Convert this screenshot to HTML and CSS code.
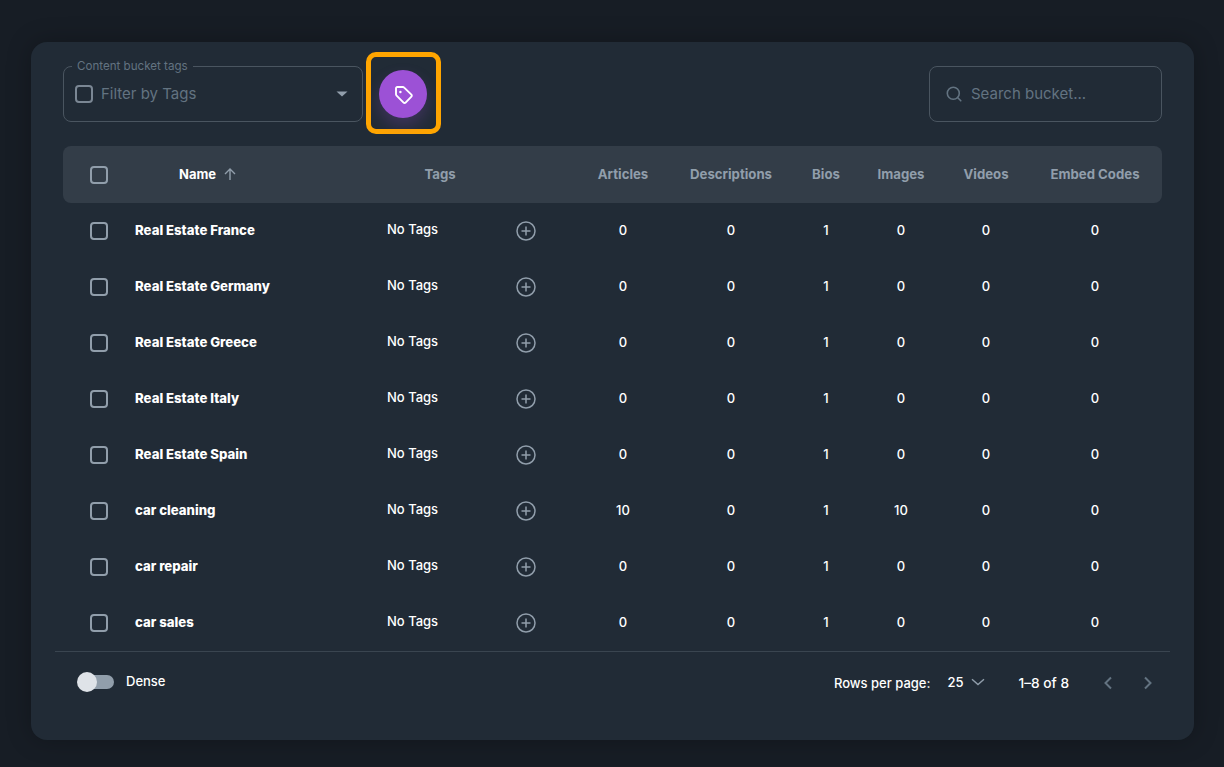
FILE: index.html
```html
<!DOCTYPE html>
<html>
<head>
    <title>Content Buckets</title>
    <meta charset="UTF-8">
    <link rel="stylesheet" href="styles.css">
</head>
<body>
    <div class="card">
        <div class="toolbar">
            <div class="filter">
                <span class="filter-label">Content bucket tags</span>
                <span class="checkbox dim"></span>
                <span class="filter-text">Filter by Tags</span>
                <svg class="caret" width="12" height="6" viewBox="0 0 12 6"><path d="M0.5 0.5h11L6 5.5z" fill="#919eab"/></svg>
            </div>
            <div class="highlight">
                <button class="tag-button">
                    <svg width="22" height="22" viewBox="0 0 22 22" fill="none" stroke="#fff" stroke-width="1.9" stroke-linejoin="round">
                        <path d="M4 5.2a1.2 1.2 0 0 1 1.2-1.2h5.6a2 2 0 0 1 1.4.6l7.2 7a1.4 1.4 0 0 1 0 2l-5.8 6a1.4 1.4 0 0 1-2 0l-7-7a2 2 0 0 1-.6-1.4z"/>
                        <circle cx="8.4" cy="9" r="1.2" fill="#fff" stroke="none"/>
                    </svg>
                </button>
            </div>
            <div class="search">
                <svg width="20" height="20" viewBox="0 0 20 20" fill="none" stroke="#637381" stroke-width="1.6" stroke-linecap="round"><circle cx="9.3" cy="9.3" r="6"/><path d="M13.8 13.8l3 3"/></svg>
                <span class="search-text">Search bucket...</span>
            </div>
        </div>

        <table class="buckets">
            <thead>
                <tr>
                    <th class="col-check"><span class="checkbox"></span></th>
                    <th class="col-name">
                        <span class="name-head">Name
                            <svg width="16" height="16" viewBox="0 0 16 16" fill="none" stroke="#919eab" stroke-width="1.4"><path d="M8 14V3M3 8l5-5 5 5"/></svg>
                        </span>
                    </th>
                    <th class="col-tags">Tags</th>
                    <th class="col-articles">Articles</th>
                    <th class="col-descriptions">Descriptions</th>
                    <th class="col-bios">Bios</th>
                    <th class="col-images">Images</th>
                    <th class="col-videos">Videos</th>
                    <th class="col-embed">Embed Codes</th>
                    <th class="col-end"></th>
                </tr>
            </thead>
            <tbody id="rows"></tbody>
        </table>

        <div class="footer">
            <div class="dense">
                <span class="switch"><span class="thumb"></span></span>
                <span class="dense-text">Dense</span>
            </div>
            <div class="pager">
                <span class="rows-label">Rows per page:</span>
                <span class="rows-value">25</span>
                <svg class="rows-chevron" width="14" height="8" viewBox="0 0 14 8" fill="none" stroke="#919eab" stroke-width="1.4"><path d="M1 1.2L7 6.5l6-5.3"/></svg>
                <span class="range">1–8 of 8</span>
                <svg class="prev" width="10" height="14" viewBox="0 0 10 14" fill="none" stroke="#637381" stroke-width="2"><path d="M8 1.5L2.5 7 8 12.5"/></svg>
                <svg class="next" width="10" height="14" viewBox="0 0 10 14" fill="none" stroke="#637381" stroke-width="2"><path d="M2 1.5L7.5 7 2 12.5"/></svg>
            </div>
        </div>
    </div>

    <script src="app.js"></script>
</body>
</html>
```

FILE: styles.css
```css
body {
    margin: 0;
    height: 767px;
    overflow: hidden;
    background-color: #171d25;
    font-family: "Inter", "Liberation Sans", sans-serif;
    color: #fff;
}
.card {
    box-sizing: border-box;
    width: 1163px;
    height: 698px;
    margin: 42px 0 0 31px;
    padding: 10px 32px 0;
    background-color: #212b36;
    border-radius: 16px;
    box-shadow: 0 0 24px rgba(0,0,0,0.25);
}
.toolbar {
    display: flex;
    align-items: flex-start;
    height: 82px;
    margin-bottom: 12px;
}
.filter {
    position: relative;
    box-sizing: border-box;
    display: flex;
    align-items: center;
    width: 300px;
    height: 56px;
    margin-top: 14px;
    padding: 0 14px 0 12px;
    border: 1px solid #4a5560;
    border-radius: 8px;
}
.filter-label {
    position: absolute;
    top: -8px;
    left: 8px;
    padding: 0 5px;
    background-color: #212b36;
    font-size: 11.6px;
    line-height: 14px;
    color: #637381;
}
.filter-text {
    flex: 1;
    margin-left: 8px;
    margin-bottom: 2px;
    font-size: 15px;
    color: #637381;
}
.checkbox {
    box-sizing: border-box;
    display: inline-block;
    width: 18px;
    height: 18px;
    border: 2px solid #919eab;
    border-radius: 4px;
    vertical-align: middle;
}
.checkbox.dim {
    margin-left: -1px;
    border-color: #7b8794;
}
.highlight {
    box-sizing: border-box;
    display: flex;
    align-items: center;
    width: 75px;
    height: 82px;
    margin-left: 3px;
    padding-left: 8px;
    border: 5px solid #ffa500;
    border-radius: 10px;
}
.tag-button {
    display: flex;
    align-items: center;
    justify-content: center;
    width: 48px;
    height: 48px;
    margin-top: 1px;
    padding: 0;
    border: none;
    border-radius: 50%;
    background-color: #9c51d6;
    box-shadow: 0 8px 16px rgba(156,81,214,0.24);
}
.search {
    box-sizing: border-box;
    display: flex;
    align-items: center;
    gap: 7px;
    width: 233px;
    height: 56px;
    margin: 14px 0 0 auto;
    padding: 0 14px;
    border: 1px solid #4a5560;
    border-radius: 8px;
}
.search-text {
    margin-bottom: 2px;
    font-size: 15px;
    color: #637381;
}
.buckets {
    width: 1099px;
    table-layout: fixed;
    border-collapse: collapse;
    font-size: 13px;
}
.buckets th,
.buckets td {
    box-sizing: border-box;
    padding: 0 0 2px;
}
.buckets th {
    height: 57px;
    background-color: #333d48;
    font-size: 13.2px;
    font-weight: 700;
    color: #919eab;
    text-align: center;
}
.buckets th:first-child {
    border-radius: 8px 0 0 8px;
}
.buckets th:last-child {
    border-radius: 0 8px 8px 0;
}
.buckets td {
    height: 56px;
    font-weight: 500;
    text-align: center;
}
.col-check { width: 72px; }
.col-name { width: 179px; }
.col-tags { width: 252px; }
.col-articles { width: 114px; }
.col-descriptions { width: 102px; }
.col-bios { width: 88px; }
.col-images { width: 62px; }
.col-videos { width: 108px; }
.col-embed { width: 110px; }
.col-end { width: 12px; }
.buckets th.col-check,
.buckets td.col-check,
.buckets td.col-tags {
    padding-bottom: 0;
}
.buckets th.col-name {
    padding-left: 44px;
    font-size: 13px;
    color: #fff;
    text-align: left;
}
.name-head {
    display: inline-flex;
    align-items: center;
    gap: 6px;
}
.buckets td.col-name {
    font-size: 13.2px;
    font-weight: 800;
    text-align: left;
}
.tags-cell {
    display: flex;
    align-items: center;
    padding-left: 73px;
}
.no-tags {
    width: 129px;
    margin-top: -4px;
    text-align: left;
}
.footer {
    display: flex;
    align-items: center;
    justify-content: space-between;
    height: 60px;
    margin: 0 -8px;
    padding: 0 0 0 22px;
    border-top: 1px solid #3a4550;
    font-size: 13px;
}
.dense {
    display: flex;
    align-items: center;
    gap: 12px;
    font-weight: 500;
}
.dense-text {
    margin-bottom: 2px;
}
.switch {
    position: relative;
    display: block;
    width: 37px;
    height: 14px;
}
.switch::before {
    content: "";
    display: block;
    width: 34px;
    height: 14px;
    margin-left: 3px;
    border-radius: 7px;
    background-color: #919eab;
}
.thumb {
    position: absolute;
    top: -3px;
    left: 0;
    width: 20px;
    height: 20px;
    border-radius: 50%;
    background-color: #dfe3e8;
}
.pager {
    display: flex;
    align-items: center;
    padding-top: 2px;
    font-weight: 500;
}
.rows-value {
    margin-left: 17px;
    margin-bottom: 2px;
}
.rows-chevron {
    margin-left: 8px;
    margin-bottom: 2px;
}
.range {
    margin-left: 33px;
    font-size: 13.7px;
}
.prev {
    margin-left: 34px;
}
.next {
    margin: 0 17px 0 30px;
}
```

FILE: app.js
```js
const names = [
    ['Real Estate France', 0, 0],
    ['Real Estate Germany', 0, 0],
    ['Real Estate Greece', 0, 0],
    ['Real Estate Italy', 0, 0],
    ['Real Estate Spain', 0, 0],
    ['car cleaning', 10, 10],
    ['car repair', 0, 0],
    ['car sales', 0, 0]
];

const plus = '<svg width="20" height="20" viewBox="0 0 20 20" fill="none" stroke="#919eab" stroke-width="1.5"><circle cx="10" cy="10" r="9"/><path d="M10 5.5v9M5.5 10h9"/></svg>';

document.getElementById('rows').innerHTML = names.map(function (row) {
    return '<tr>' +
        '<td class="col-check"><span class="checkbox"></span></td>' +
        '<td class="col-name">' + row[0] + '</td>' +
        '<td class="col-tags"><div class="tags-cell"><span class="no-tags">No Tags</span>' + plus + '</div></td>' +
        '<td>' + row[1] + '</td>' +
        '<td>0</td>' +
        '<td>1</td>' +
        '<td>' + row[2] + '</td>' +
        '<td>0</td>' +
        '<td>0</td>' +
        '<td></td>' +
        '</tr>';
}).join('');
```
